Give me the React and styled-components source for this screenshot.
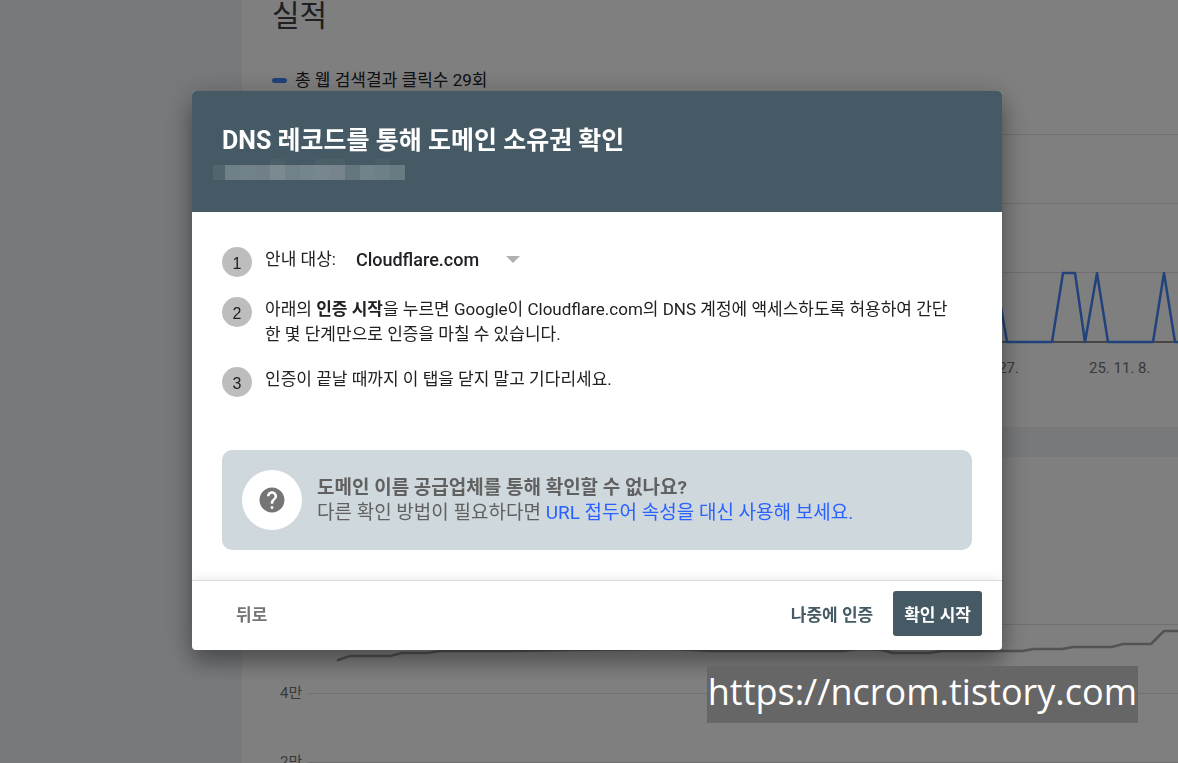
import { useState } from "react";
import styled, { createGlobalStyle } from "styled-components";

const GlobalStyle = createGlobalStyle`
  * {
    box-sizing: border-box;
  }

  body {
    margin: 0;
    font-family: Roboto, "Noto Sans CJK KR", sans-serif;
    color: #202124;
  }
`;

/* page behind the dialog */

const Page = styled.div`
  display: grid;
  grid-template-columns: 242px minmax(0, 1fr);
  height: 100vh;
  overflow: hidden;
  background-color: #f1f3f7;
`;

const Report = styled.main`
  grid-column: 2;
  display: flex;
  flex-direction: column;
  gap: 30px;
`;

const Card = styled.section`
  flex-shrink: 0;
  background-color: #ffffff;
`;

const CardTitle = styled.h1`
  margin: 0;
  padding: 0 30px;
  font-size: 30px;
  font-weight: 400;
  line-height: 32px;
  color: #3c4043;
`;

const Legend = styled.div`
  display: flex;
  align-items: center;
  gap: 8px;
  padding: 36px 30px 0;
  font-size: 17px;
  line-height: 24px;
`;

const LegendMark = styled.span`
  width: 15px;
  height: 5px;
  border-radius: 3px;
  background-color: #4285f4;
`;

const Chart = styled.svg`
  display: block;
  width: 100%;
  height: ${(props) => props.$height};

  line {
    stroke: #e0e0e0;
  }

  polyline {
    fill: none;
    stroke-width: 2.5;
    stroke-linejoin: round;
    stroke-linecap: round;
  }

  text {
    font-size: 15px;
    fill: #757575;
  }
`;

const ClicksChart = () => (
  <Chart $height="335px" role="img" aria-label="총 웹 검색결과 클릭수">
    <line x1="66" x2="100%" y1="42.5" y2="42.5" />
    <line x1="66" x2="100%" y1="111.5" y2="111.5" />
    <line x1="66" x2="100%" y1="180.5" y2="180.5" />
    <line
      x1="66"
      x2="100%"
      y1="250"
      y2="250"
      style={{ stroke: "#8c8c8c", strokeWidth: 2 }}
    />
    <polyline
      stroke="#4285f4"
      points="743,250 753,181 765,250 810,250 821,181 833,181 843,250 855,181 866,250 911,250 922,181 933,250 960,250"
    />
    <text x="777" y="281" textAnchor="end">
      27.
    </text>
    <text x="847" y="281">
      25. 11. 8.
    </text>
  </Chart>
);

const IndexChart = () => (
  <Chart $height="400px" role="img" aria-label="색인 생성">
    <line x1="66" x2="100%" y1="167.5" y2="167.5" />
    <line x1="66" x2="100%" y1="236.5" y2="236.5" />
    <line x1="66" x2="100%" y1="305.5" y2="305.5" />
    <polyline
      stroke="#a6a6a6"
      points="96,203 108,199 148,199 160,196 186,196 198,194 260,194 330,193 430,192 470,194 600,194 620,192 640,193 651,196 688,196 699,194 780,194 792,192 820,192 831,190 870,190 881,187 909,187 922,174 960,174"
    />
    <text x="38" y="241">
      4만
    </text>
    <text x="38" y="310">
      2만
    </text>
  </Chart>
);

/* dialog */

const Backdrop = styled.div`
  position: fixed;
  inset: 0;
  display: flex;
  align-items: center;
  justify-content: center;
  padding: 0 0 22px 16px;
  background-color: rgba(0, 0, 0, 0.5);
`;

const Dialog = styled.div`
  width: 810px;
  max-width: 100%;
  border-radius: 4px;
  overflow: hidden;
  background-color: #ffffff;
  box-shadow: 0 14px 20px rgba(0, 0, 0, 0.2), 0 6px 30px rgba(0, 0, 0, 0.3);
`;

const DialogHeader = styled.header`
  padding: 32px 30px;
  background-color: #455a64;
  color: #ffffff;
`;

const DialogTitle = styled.h2`
  margin: 0;
  font-size: 25px;
  font-weight: 700;
  line-height: 36px;
`;

const HiddenDomain = styled.svg`
  display: block;
  margin-left: -9px;
`;

const DialogBody = styled.div`
  padding: 35px 30px 30px;
`;

const Steps = styled.ol`
  display: flex;
  flex-direction: column;
  gap: 20px;
  margin: 0 0 53px;
  padding: 0;
  list-style: none;
`;

const Step = styled.li`
  display: flex;
  gap: 13px;
  min-height: 30px;
`;

const StepNumber = styled.span`
  flex-shrink: 0;
  width: 30px;
  height: 30px;
  border-radius: 50%;
  background-color: #bdbdbd;
  font-family: "Liberation Sans", sans-serif;
  font-size: 16px;
  line-height: 34px;
  text-align: center;
`;

const StepText = styled.div`
  display: flex;
  align-items: flex-start;
  gap: 20px;
  padding-right: 16px;
  font-size: 17px;
  line-height: 25px;
`;

const Select = styled.select`
  appearance: none;
  grid-area: 1 / 1;
  width: 100%;
  height: 25px;
  padding: 0 40px 0 0;
  border: none;
  background: transparent;
  font-family: inherit;
  font-size: 18px;
  font-weight: 500;
  line-height: 25px;
  color: #202124;
`;

const SelectWrap = styled.span`
  display: grid;
  align-items: center;
  justify-items: end;

  svg {
    grid-area: 1 / 1;
    pointer-events: none;
  }
`;

const Help = styled.div`
  display: flex;
  align-items: center;
  gap: 15px;
  min-height: 100px;
  padding: 20px;
  border-radius: 10px;
  background-color: #cfd8dd;
`;

const HelpIcon = styled.span`
  display: flex;
  align-items: center;
  justify-content: center;
  width: 60px;
  height: 60px;
  border-radius: 50%;
  background-color: #ffffff;
`;

const HelpText = styled.p`
  margin: 0;
  font-size: 19px;
  line-height: 25px;
  color: #616161;
`;

const HelpLink = styled.a`
  color: #2962ff;
  text-decoration: none;
`;

const DialogFooter = styled.footer`
  display: flex;
  align-items: center;
  gap: 9px;
  padding: 10px 20px 14px;
  border-top: 1px solid #dadada;
  box-shadow: 0 0 12px rgba(0, 0, 0, 0.1);
`;

const Button = styled.button`
  height: 45px;
  padding: 0 11px;
  border: none;
  border-radius: 3px;
  background-color: ${(props) => (props.$primary ? "#455a64" : "transparent")};
  font-family: inherit;
  font-size: 17px;
  font-weight: 700;
  color: ${(props) =>
    props.$primary ? "#ffffff" : props.$quiet ? "#757575" : "#455a64"};
  cursor: pointer;
`;

const BackButton = styled(Button)`
  margin-right: auto;
  padding: 0 24px;
`;

const Watermark = styled.div`
  position: fixed;
  right: 40px;
  bottom: 40px;
  height: 57px;
  padding: 0 1px;
  background-color: #666666;
  font-family: "Open Sans", "Noto Sans", sans-serif;
  font-size: 36px;
  line-height: 52px;
  color: #ffffff;
`;

const blocks = [
  "#6f8089",
  "#71828a",
  "#6f8089",
  "#7b8a91",
  "#708189",
  "#75858d",
  "#77878e",
  "#75848d",
  "#64777e",
  "#71828a",
  "#6d7f87",
  "#687a82",
];

const App = () => {
  const [provider, setProvider] = useState("Cloudflare.com");

  return (
    <>
      <GlobalStyle />
      <Page>
        <Report>
          <Card>
            <CardTitle>실적</CardTitle>
            <Legend>
              <LegendMark />총 웹 검색결과 클릭수 29회
            </Legend>
            <ClicksChart />
          </Card>
          <Card>
            <IndexChart />
          </Card>
        </Report>
      </Page>

      <Backdrop>
        <Dialog role="dialog" aria-modal="true" aria-labelledby="dialog-title">
          <DialogHeader>
            <DialogTitle id="dialog-title">
              DNS 레코드를 통해 도메인 소유권 확인
            </DialogTitle>
            {/* hidden domain name */}
            <HiddenDomain width="192" height="21" shapeRendering="crispEdges">
              <rect x="57" width="15" height="6" fill="#4a5f68" />
              <rect x="102" width="30" height="6" fill="#4a5f68" />
              <rect x="162" width="15" height="6" fill="#4a5f68" />
              <rect y="6" width="12" height="15" fill="#50656d" />
              {blocks.map((color, i) => (
                <rect
                  key={i}
                  x={12 + i * 15}
                  y="6"
                  width="15"
                  height="15"
                  fill={color}
                />
              ))}
            </HiddenDomain>
          </DialogHeader>

          <DialogBody>
            <Steps>
              <Step>
                <StepNumber>1</StepNumber>
                <StepText>
                  <label htmlFor="provider">안내 대상:</label>
                  <SelectWrap>
                    <Select
                      id="provider"
                      value={provider}
                      onChange={(e) => setProvider(e.target.value)}
                    >
                      <option>Cloudflare.com</option>
                    </Select>
                    <svg width="14" height="7" viewBox="0 0 14 7">
                      <path d="M0 0h14L7 7z" fill="#afafaf" />
                    </svg>
                  </SelectWrap>
                </StepText>
              </Step>
              <Step>
                <StepNumber>2</StepNumber>
                <StepText>
                  <span>
                    아래의 <b>인증 시작</b>을 누르면 Google이 Cloudflare.com의
                    DNS 계정에 액세스하도록 허용하여 간단한 몇 단계만으로 인증을
                    마칠 수 있습니다.
                  </span>
                </StepText>
              </Step>
              <Step>
                <StepNumber>3</StepNumber>
                <StepText>
                  인증이 끝날 때까지 이 탭을 닫지 말고 기다리세요.
                </StepText>
              </Step>
            </Steps>

            <Help>
              <HelpIcon>
                <svg width="30" height="30" viewBox="0 0 24 24" fill="#757575">
                  <path d="M12 2C6.48 2 2 6.48 2 12s4.48 10 10 10 10-4.48 10-10S17.52 2 12 2zm1 17h-2v-2h2v2zm2.07-7.75l-.9.92C13.45 12.9 13 13.5 13 15h-2v-.5c0-1.1.45-2.1 1.17-2.83l1.24-1.26c.37-.36.59-.86.59-1.41 0-1.1-.9-2-2-2s-2 .9-2 2H8c0-2.21 1.79-4 4-4s4 1.79 4 4c0 .88-.36 1.68-.93 2.25z" />
                </svg>
              </HelpIcon>
              <HelpText>
                <b>도메인 이름 공급업체를 통해 확인할 수 없나요?</b>
                <br />
                다른 확인 방법이 필요하다면{" "}
                <HelpLink href="#url-prefix">
                  URL 접두어 속성을 대신 사용해 보세요.
                </HelpLink>
              </HelpText>
            </Help>
          </DialogBody>

          <DialogFooter>
            <BackButton $quiet>뒤로</BackButton>
            <Button>나중에 인증</Button>
            <Button $primary>확인 시작</Button>
          </DialogFooter>
        </Dialog>
      </Backdrop>

      <Watermark>https://ncrom.tistory.com</Watermark>
    </>
  );
};

export default App;
